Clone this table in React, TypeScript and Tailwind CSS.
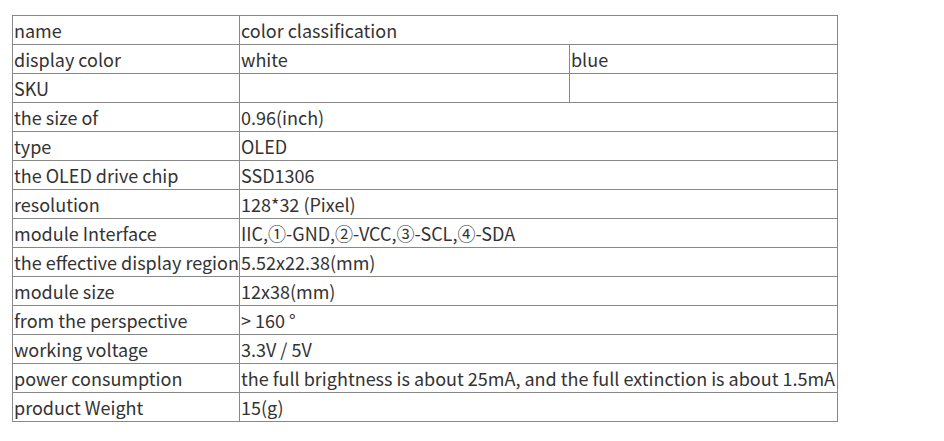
import React from 'react';

const ROWS: [string, string][] = [
  ['the size of', '0.96(inch)'],
  ['type', 'OLED'],
  ['the OLED drive chip', 'SSD1306'],
  ['resolution', '128*32 (Pixel)'],
  ['module Interface', 'IIC,①-GND,②-VCC,③-SCL,④-SDA'],
  ['the effective display region', '5.52x22.38(mm)'],
  ['module size', '12x38(mm)'],
  ['from the perspective', '> 160 °'],
  ['working voltage', '3.3V / 5V'],
  ['power consumption', 'the full brightness is about 25mA, and the full extinction is about 1.5mA'],
  ['product Weight', '15(g)'],
];

const cell = 'border border-[#888] px-[1px] h-[29px] p-0 pl-[1px] align-middle whitespace-nowrap overflow-hidden';

export default function App() {
  return (
    <div
      className="w-[944px] h-[441px] bg-white pt-[15px] pl-[12px] text-[18px] leading-[27px] text-[#333]"
      style={{ fontFamily: '"Noto Sans CJK SC", "Noto Sans", sans-serif' }}
    >
      <table className="table-fixed border-collapse w-[825px]">
        <colgroup>
          <col className="w-[227px]" />
          <col className="w-[330px]" />
          <col className="w-[268px]" />
        </colgroup>
        <tbody>
          <tr>
            <td className={cell}>name</td>
            <td className={cell} colSpan={2}>color classification</td>
          </tr>
          <tr>
            <td className={cell}>display color</td>
            <td className={cell}>white</td>
            <td className={cell}>blue</td>
          </tr>
          <tr>
            <td className={cell}>SKU</td>
            <td className={cell}></td>
            <td className={cell}></td>
          </tr>
          {ROWS.map(([k, v]) => (
            <tr key={k}>
              <td className={cell}>{k}</td>
              <td className={cell + ' overflow-visible'} colSpan={2}>{v}</td>
            </tr>
          ))}
        </tbody>
      </table>
    </div>
  );
}
